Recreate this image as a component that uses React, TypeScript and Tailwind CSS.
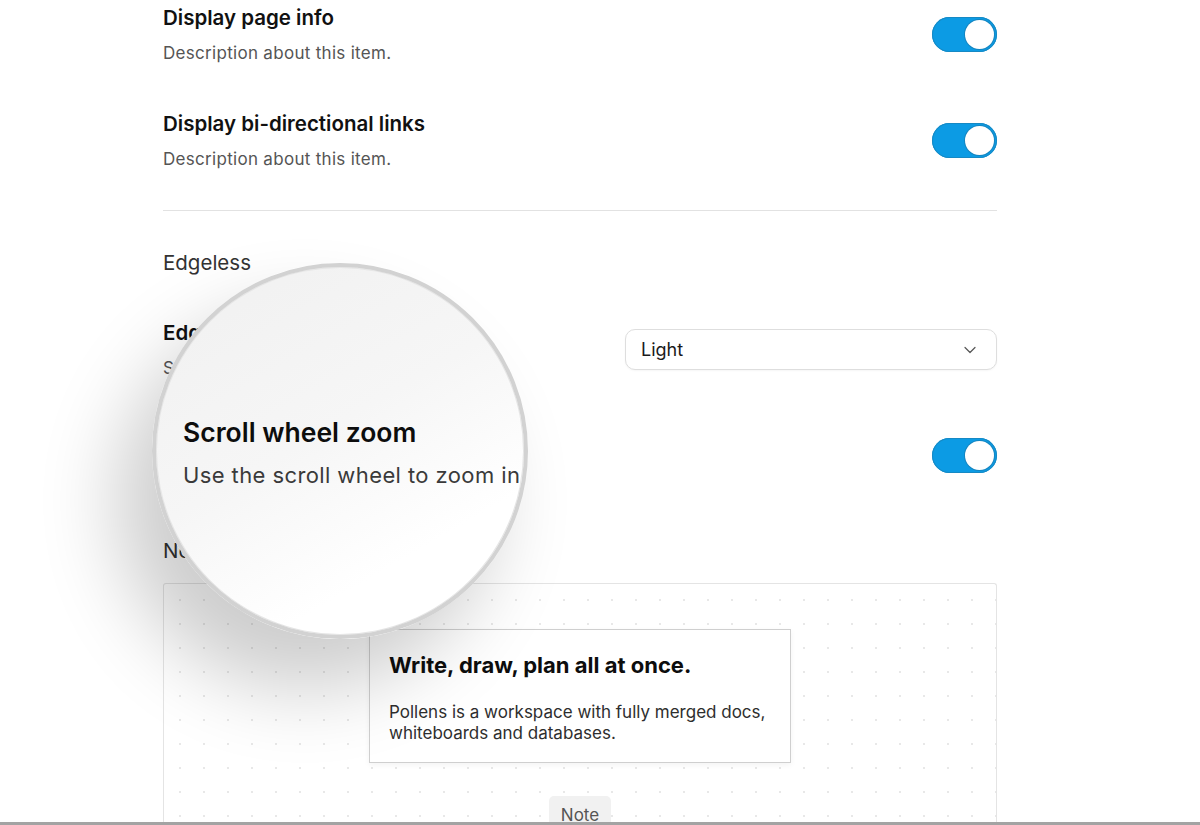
const Toggle = () => (
  <div className="flex h-[35px] w-[65px] shrink-0 items-center justify-end rounded-full bg-[#0c9be4] p-[3px] shadow-[inset_0_0_0_1px_#1689c4]">
    <div className="h-[29px] w-[29px] rounded-full bg-white shadow-[0_0_0_1px_#1585c0]" />
  </div>
);

type RowProps = { title: string; desc: string; right: React.ReactNode };

const SettingRow = ({ title, desc, right }: RowProps) => (
  <div className="flex items-center justify-between">
    <div>
      <div className="text-[20.5px] leading-[26px] font-semibold text-[#111]">{title}</div>
      <div className="mt-[11px] text-[17px] leading-[22px] tracking-[0.3px] text-[#555]">{desc}</div>
    </div>
    {right}
  </div>
);

const ThemeSelect = () => (
  <div className="flex h-[41px] w-[372px] items-center justify-between rounded-[10px] border border-[#dedede] bg-white pl-[15px] pr-[20px] shadow-[0_1px_2px_rgba(0,0,0,0.04)]">
    <span className="text-[18px] text-[#1a1a1a]">Light</span>
    <svg width="12" height="8" viewBox="0 0 12 8" fill="none">
      <path d="M1 1.5l5 5 5-5" stroke="#555" strokeWidth="1.2" strokeLinecap="round" strokeLinejoin="round" />
    </svg>
  </div>
);

const Magnifier = () => (
  <div className="absolute left-[152px] top-[263px] h-[376px] w-[376px] rounded-full shadow-[-35px_50px_80px_rgba(0,0,0,0.2)]">
    <div className="h-full w-full overflow-hidden rounded-full border-[4px] border-[#d2d2d2] bg-[linear-gradient(150deg,#f0f0f0_0%,#f6f6f6_45%,#ffffff_75%)] shadow-[inset_0_0_0_1px_#e6e6e6]">
      <div className="pl-[27px] pt-[149px]">
        <div className="whitespace-nowrap text-[26.5px] leading-[32px] font-semibold text-[#0d0d0d]">Scroll wheel zoom</div>
        <div className="mt-[12px] whitespace-nowrap text-[22px] leading-[30px] tracking-[0.4px] text-[#3a3a3a]">
          Use the scroll wheel to zoom in and out
        </div>
      </div>
    </div>
  </div>
);

const NotePreview = () => (
  <div className="relative mt-[19px] flex h-[260px] flex-col items-center rounded-t-[3px] border border-b-0 border-[#e4e4e4] bg-white bg-[radial-gradient(circle,#e8e8e8_1px,transparent_1.2px)] bg-[length:24px_24px] bg-[position:4px_4px] pt-[45px]">
    <div className="w-[422px] border border-[#cfcfcf] bg-white px-[19px] pb-[18px] pt-[21px] shadow-[0_2px_6px_rgba(0,0,0,0.05)]">
      <div className="text-[22px] leading-[28px] font-bold text-[#0d0d0d]">Write, draw, plan all at once.</div>
      <div className="mt-[23px] text-[17px] leading-[21px] text-[#2e2e2e]">
        Pollens is a workspace with fully merged docs, whiteboards and databases.
      </div>
    </div>
    <div className="mt-[33px] rounded-t-[5px] bg-[#f1f1f1] px-[12px] pt-[7px] text-[17px] leading-[24px] text-[#555]">Note</div>
  </div>
);

export default function App() {
  return (
    <div className="relative flex h-[825px] w-[1200px] flex-col overflow-hidden bg-white font-['Inter',sans-serif]">
      <div className="flex-1 overflow-hidden pl-[163px] pt-[5px]">
        <div className="w-[834px]">
          <SettingRow title="Display page info" desc="Description about this item." right={<Toggle />} />
          <div className="mt-[47px]">
            <SettingRow title="Display bi-directional links" desc="Description about this item." right={<Toggle />} />
          </div>
          <div className="mt-[40px] border-t border-[#e2e2e2]" />
          <div className="mt-[39px] text-[20.5px] leading-[26px] text-[#333]">Edgeless</div>
          <div className="mt-[44px]">
            <SettingRow title="Edgeless theme" desc="Select the theme." right={<ThemeSelect />} />
          </div>
          <div className="mt-[47px]">
            <SettingRow title="Scroll wheel zoom" desc="Use the scroll wheel to zoom in." right={<Toggle />} />
          </div>
          <div className="mt-[53px] text-[20.5px] leading-[26px] text-[#333]">Note</div>
          <NotePreview />
        </div>
      </div>
      <div className="h-[3px] w-full shrink-0 bg-[#a3a3a3]" />
      <Magnifier />
    </div>
  );
}
